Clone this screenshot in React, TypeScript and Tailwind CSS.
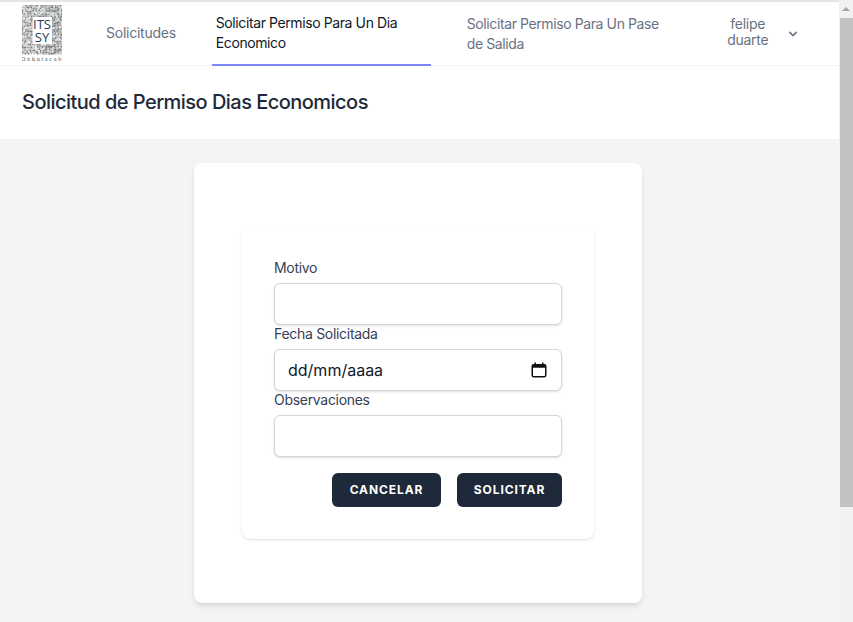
const FONT = "font-['Inter',sans-serif]";

// pseudo random speckle for the logo border
function speckle() {
  const cells: { x: number; y: number; c: string }[] = [];
  let seed = 17;
  for (let y = 0; y < 49; y += 1.5) {
    for (let x = 0; x < 40; x += 1.5) {
      const inCenter = x > 9.5 && x < 30 && y > 11 && y < 38;
      if (inCenter) continue;
      seed = (seed * 9301 + 49297) % 233280;
      const v = seed / 233280;
      const c = v < 0.25 ? "#7c7f80" : v < 0.55 ? "#a5a8a9" : v < 0.85 ? "#c8cacb" : "#e6e7e7";
      cells.push({ x, y, c });
    }
  }
  return cells;
}

function Logo() {
  return (
    <svg width="40" height="58" viewBox="0 0 40 58" className="shrink-0">
      {speckle().map((s, i) => (
        <rect key={i} x={s.x} y={s.y} width="1.5" height="1.5" fill={s.c} />
      ))}
      <text textAnchor="middle" fontSize="13" fontFamily="Open Sans, sans-serif" fill="#2a3a5a">
        <tspan x="20" y="24">ITS</tspan>
        <tspan x="20" y="37">SY</tspan>
      </text>
      <text x="20" y="56" textAnchor="middle" fontSize="6.2" letterSpacing="1.7" fontFamily="Liberation Serif, serif" fill="#555">Oxkutzcab</text>
    </svg>
  );
}

function Field({ label, children }: { label: string; children?: React.ReactNode }) {
  return (
    <div>
      <label className="block h-6 text-sm leading-[18px] text-gray-700 tracking-[-0.3px]">{label}</label>
      {children}
    </div>
  );
}

const inputClass =
  "block w-full h-[42px] rounded-md border border-gray-300 bg-white px-[13px] text-base text-gray-900 shadow-sm outline-none";

export default function App() {
  return (
    <div className={`${FONT} flex h-[622px] w-[853px] overflow-hidden bg-gray-100`}>
      <div className="flex w-[839px] shrink-0 flex-col">
        <nav className="flex h-[66px] items-stretch border-t-2 border-b border-t-[#e5e5e5] border-b-gray-100 bg-white text-sm leading-5">
          <div className="flex items-center pl-[22px]">
            <Logo />
          </div>
          <a className="ml-[40px] flex items-center px-1 pb-[1px] text-gray-500 tracking-[-0.25px]">Solicitudes</a>
          <a className="ml-8 -mb-px flex w-[219px] items-center border-b-2 border-indigo-400 px-1 text-gray-900 tracking-[-0.4px]">
            Solicitar Permiso Para Un Dia Economico
          </a>
          <a className="ml-8 flex w-[229px] items-center px-1 pr-[30px] text-gray-500 tracking-[-0.4px]">
            Solicitar Permiso Para Un Pase de Salida
          </a>
          <div className="ml-[26px] flex items-center text-gray-500">
            <span className="w-[60px] text-center leading-4 tracking-[-0.25px] pb-[4px]">felipe duarte</span>
            <svg className="ml-[7px] h-4 w-4 fill-current" viewBox="0 0 20 20">
              <path
                fillRule="evenodd"
                clipRule="evenodd"
                d="M5.293 7.293a1 1 0 011.414 0L10 10.586l3.293-3.293a1 1 0 111.414 1.414l-4 4a1 1 0 01-1.414 0l-4-4a1 1 0 010-1.414z"
              />
            </svg>
          </div>
        </nav>

        <header className="flex h-[73px] items-center bg-white px-[22px] pb-[2px]">
          <h2 className="text-xl font-medium text-gray-800 tracking-[-0.53px]">Solicitud de Permiso Dias Economicos</h2>
        </header>

        <main className="pl-[194px] pt-6">
          <div className="h-[440px] w-[448px] rounded-lg bg-white px-12 pt-16 shadow-md">
            <form className="h-[312px] w-[352px] rounded-lg bg-white p-8 shadow-sm">
              <Field label="Motivo">
                <input className={inputClass} />
              </Field>
              <Field label="Fecha Solicitada">
                <div className="relative">
                  <input className={inputClass} readOnly defaultValue="dd/mm/aaaa" />
                  <svg className="absolute right-[14px] top-[12px] h-[18px] w-[18px]" viewBox="0 0 24 24" fill="none">
                    <path d="M7 2v3M17 2v3" stroke="#111" strokeWidth="2" />
                    <rect x="3" y="5" width="18" height="16" rx="2" stroke="#111" strokeWidth="2" />
                    <rect x="3" y="5" width="18" height="4" fill="#111" />
                  </svg>
                </div>
              </Field>
              <Field label="Observaciones">
                <input className={inputClass} />
              </Field>
              <div className="mt-4 flex justify-end gap-4">
                <button type="button" className="h-[34px] w-[109px] rounded-md bg-gray-800 text-xs font-bold uppercase tracking-[0.9px] text-white">
                  Cancelar
                </button>
                <button type="button" className="h-[34px] w-[105px] rounded-md bg-gray-800 text-xs font-bold uppercase tracking-[0.9px] text-white">
                  Solicitar
                </button>
              </div>
            </form>
          </div>
        </main>
      </div>

      <div className="flex w-[14px] shrink-0 flex-col bg-[#f1f1f1]">
        <div className="flex h-[18px] items-center justify-center">
          <div className="h-0 w-0 border-x-[4px] border-b-[4px] border-x-transparent border-b-[#a3a3a3]" />
        </div>
        <div className="ml-[1px] h-[489px] bg-[#c1c1c1]" />
      </div>
    </div>
  );
}
